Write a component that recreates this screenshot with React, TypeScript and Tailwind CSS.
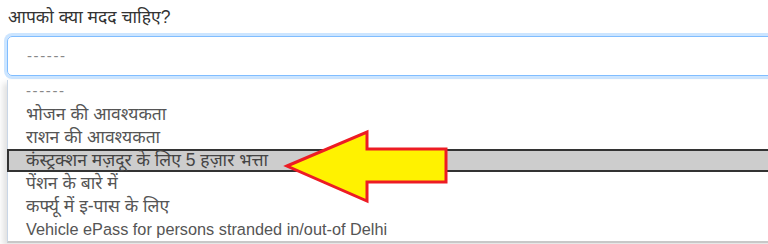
import React from "react";

const options = [
  { t: "------", dash: true },
  { t: "भोजन की आवश्यकता" },
  { t: "राशन की आवश्यकता" },
  { t: "कंस्ट्रक्शन मज़दूर के लिए 5 हज़ार भत्ता" },
  { t: "पेंशन के बारे में" },
  { t: "कर्फ्यू में इ-पास के लिए" },
  { t: "Vehicle ePass for persons stranded in/out-of Delhi", latin: true },
];

export default function App() {
  return (
    <div
      className="relative w-[768px] h-[244px] overflow-hidden bg-white"
      style={{ fontFamily: '"Liberation Sans", "Noto Sans", sans-serif' }}
    >
      <div className="pt-[4px] pl-[8px] text-[17.5px] leading-[26px] text-[#333]">आपको क्या मदद चाहिए?</div>
      <div className="ml-[7px] mt-[6px] w-[800px] h-[40px] rounded-[5px] border border-[#80bdff] shadow-[0_0_0_3px_rgba(0,123,255,0.2)] flex items-center pl-[19px] text-[15px] tracking-[1.6px] text-[#888]">
        ------
      </div>
      <div className="ml-[7px] mt-[4px] w-[800px] flex flex-col border-l border-l-[#c9d6e6] border-b-2 border-b-[#c8c8c8] shadow-[-4px_3px_6px_rgba(0,0,0,0.12)] bg-white">
        {options.map((o, i) => (
          <div
            key={i}
            className={
              (i === 3
                ? "h-[23px] flex items-center pl-[17px] text-[#444] bg-[#cdcdcd] border-2 border-[#333] -ml-px"
                : "h-[23px] flex items-center pl-[18px] text-[#555]") +
              (o.latin ? " text-[16.3px]" : o.dash ? " text-[15px] tracking-[1.6px] text-[#888]" : " text-[17.5px]")
            }
          >
            {o.t}
          </div>
        ))}
      </div>
      <svg className="absolute left-0 top-0" width="768" height="244" viewBox="0 0 768 244">
        <polygon
          points="287,166 367,132 367,149 446,149 446,182 367,182 367,201"
          fill="#fff200"
          stroke="#ed1c24"
          strokeWidth="3"
          strokeLinejoin="miter"
        />
      </svg>
    </div>
  );
}
